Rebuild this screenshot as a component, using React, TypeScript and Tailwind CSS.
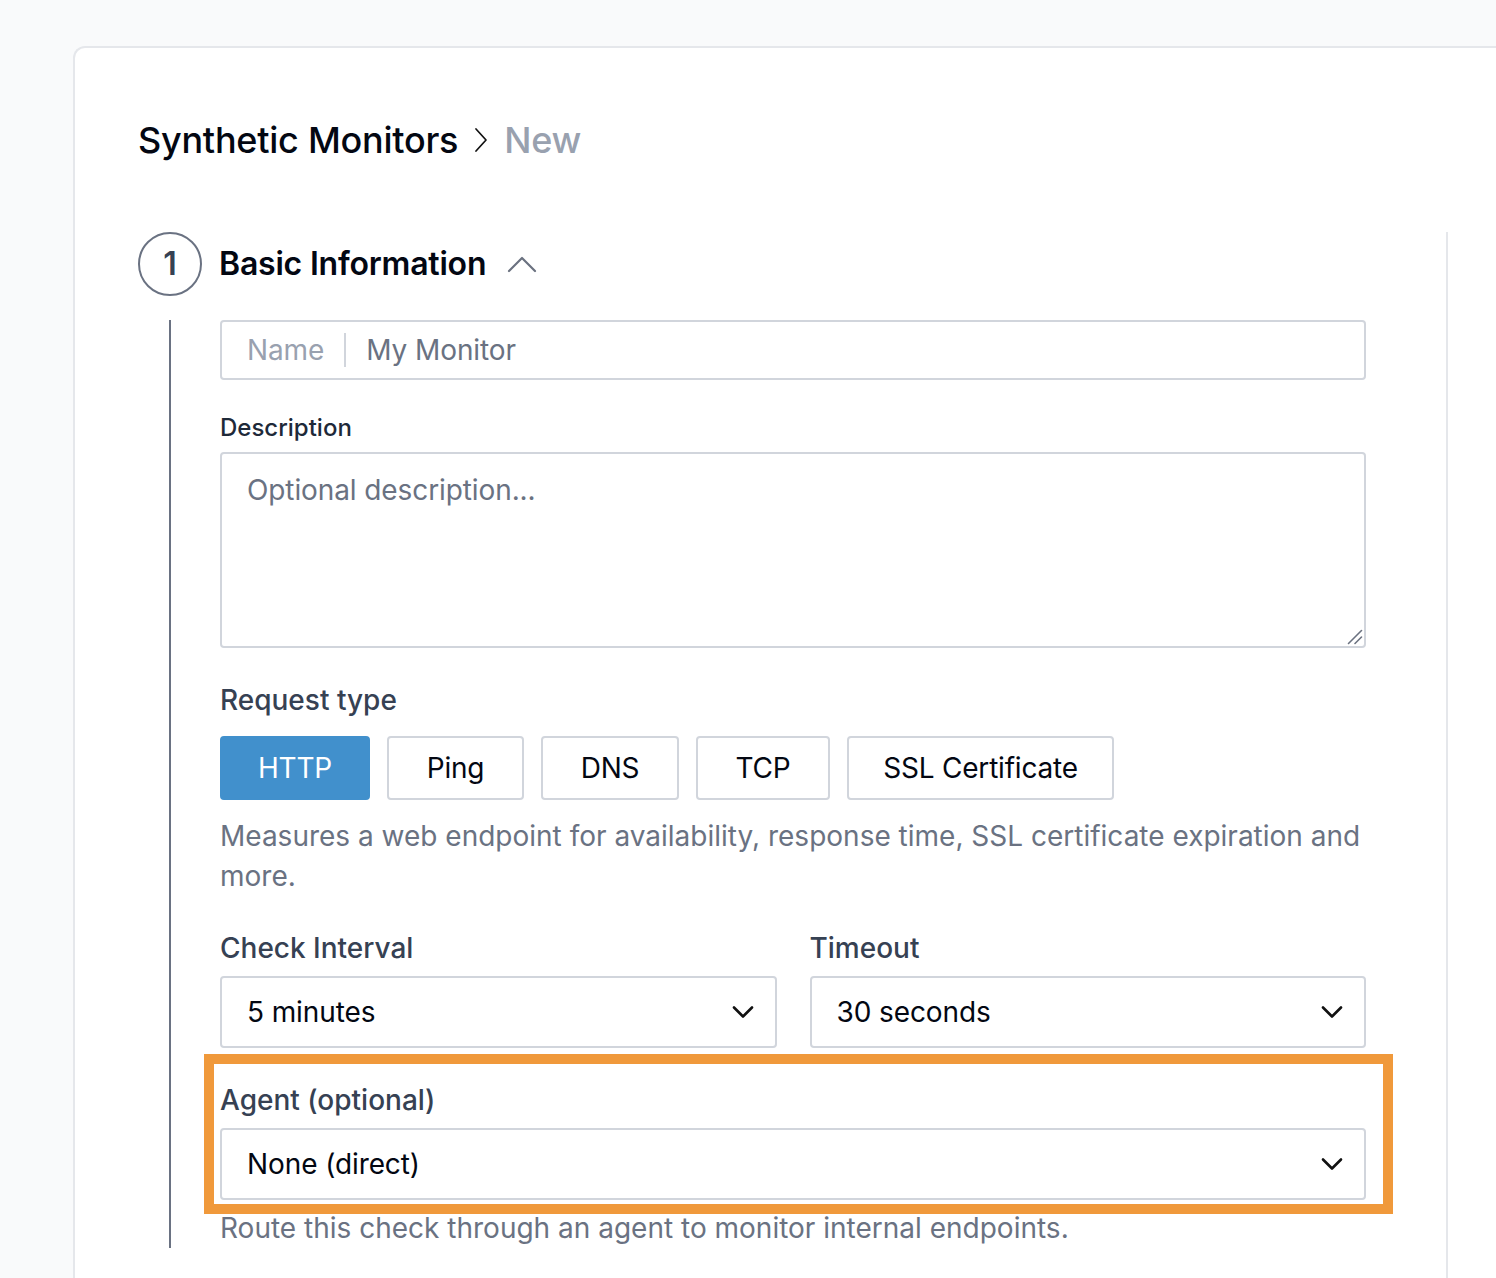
import React from "react";

const ChevronDown = () => (
  <svg width="22" height="14" viewBox="0 0 22 14" fill="none" className="shrink-0">
    <path d="M2 2.5 L11 11.5 L20 2.5" stroke="#111111" strokeWidth="2.6" strokeLinecap="round" strokeLinejoin="round" />
  </svg>
);

const SelectBox = ({ value }: { value: string }) => (
  <div className="flex h-[72px] items-center justify-between rounded-[4px] border-2 border-gray-300 bg-white pl-[25px] pr-[21px]">
    <span className="text-[28px] leading-[40px] tracking-[-0.1px] text-gray-950">{value}</span>
    <ChevronDown />
  </div>
);

const types = [
  { label: "HTTP", w: "w-[150px]", active: true },
  { label: "Ping", w: "w-[137px]", active: false },
  { label: "DNS", w: "w-[138px]", active: false },
  { label: "TCP", w: "w-[134px]", active: false },
  { label: "SSL Certificate", w: "w-[267px]", active: false },
];

export default function App() {
  return (
    <div
      className="h-[1278px] overflow-hidden bg-gray-50 pl-[73px] pt-[46px]"
      style={{ fontFamily: "Inter, 'Noto Sans', sans-serif" }}
    >
      <div className="mr-[-40px] min-h-[1300px] rounded-tl-[12px] border-l-2 border-t-2 border-gray-200 bg-white pl-[63px] pt-[72px]">
        {/* Breadcrumb */}
        <div className="flex h-[40px] items-center text-[36px] font-medium leading-[40px] tracking-[-0.25px]">
          <span className="text-gray-950">Synthetic Monitors</span>
          <svg width="14" height="28" viewBox="0 0 14 28" fill="none" className="ml-[16px] mr-[16px]">
            <path d="M2 3 L12 14 L2 25" stroke="#111111" strokeWidth="1.7" strokeLinecap="round" strokeLinejoin="round" />
          </svg>
          <span className="text-gray-400">New</span>
        </div>

        <div className="mt-[72px] flex">
          <div className="w-[1308px] shrink-0 pr-[80px]">
            {/* Step header */}
            <div className="flex items-center gap-[17px]">
              <div className="flex h-16 w-16 items-center justify-center rounded-full border-2 border-gray-500 text-[32px] font-semibold text-gray-700">
                1
              </div>
              <span className="text-[32px] font-semibold leading-[40px] tracking-[-0.2px] text-gray-950">Basic Information</span>
              <svg width="30" height="18" viewBox="0 0 30 18" fill="none" className="ml-[4px]">
                <path d="M2 16 L15 3 L28 16" stroke="#6b7280" strokeWidth="2.2" strokeLinecap="round" strokeLinejoin="round" />
              </svg>
            </div>

            {/* Step body */}
            <div className="ml-[31px] mt-6 flex flex-col gap-8 border-l-2 border-gray-500 pl-[49px]">
              {/* Name */}
              <div className="flex h-[60px] items-center rounded-[4px] border-2 border-gray-300 bg-white px-[25px]">
                <span className="text-[28px] leading-[40px] tracking-[-0.1px] text-gray-400">Name</span>
                <div className="mx-[20px] h-[34px] w-[2px] bg-gray-300" />
                <input
                  className="flex-1 bg-transparent text-[28px] leading-[40px] tracking-[-0.1px] text-gray-900 outline-none placeholder:text-gray-500"
                  placeholder="My Monitor"
                />
              </div>

              {/* Description */}
              <div>
                <div className="text-[24px] font-medium leading-[32px] text-gray-800">Description</div>
                <div className="relative mt-2">
                  <textarea
                    className="block h-[196px] w-full resize-none rounded-[4px] border-2 border-gray-300 bg-white px-[25px] pt-[16px] text-[28px] leading-[40px] tracking-[-0.1px] text-gray-900 outline-none placeholder:text-gray-500"
                    placeholder="Optional description..."
                  />
                  <svg width="16" height="16" viewBox="0 0 16 16" fill="none" className="pointer-events-none absolute bottom-[3px] right-[3px]">
                    <path d="M1.5 14.5 L14.5 1.5" stroke="#6b7280" strokeWidth="1.6" strokeLinecap="round" />
                    <path d="M8 14.5 L14.5 8" stroke="#6b7280" strokeWidth="1.6" strokeLinecap="round" />
                  </svg>
                </div>
              </div>

              {/* Request type */}
              <div>
                <div className="text-[28px] font-medium leading-[40px] text-gray-700">Request type</div>
                <div className="mt-4 flex gap-[17px]">
                  {types.map((t) => (
                    <div
                      key={t.label}
                      className={
                        t.active
                          ? `${t.w} flex h-[64px] items-center justify-center rounded-[4px] border-2 border-[#4190cc] bg-[#4190cc] text-[28px] tracking-[-0.2px] text-white`
                          : `${t.w} flex h-[64px] items-center justify-center rounded-[4px] border-2 border-gray-300 bg-white text-[28px] tracking-[-0.2px] text-gray-950`
                      }
                    >
                      {t.label}
                    </div>
                  ))}
                </div>
                <p className="mt-4 text-[28px] leading-[40px] text-gray-500">
                  Measures a web endpoint for availability, response time, SSL certificate expiration and more.
                </p>
              </div>

              {/* Interval / Timeout */}
              <div className="grid grid-cols-2 gap-[33px]">
                <div>
                  <div className="text-[28px] font-medium leading-[40px] text-gray-700">Check Interval</div>
                  <div className="mt-2">
                    <SelectBox value="5 minutes" />
                  </div>
                </div>
                <div>
                  <div className="text-[28px] font-medium leading-[40px] text-gray-700">Timeout</div>
                  <div className="mt-2">
                    <SelectBox value="30 seconds" />
                  </div>
                </div>
              </div>

              {/* Agent */}
              <div>
                <div className="relative">
                  <div className="text-[28px] font-medium leading-[40px] text-gray-700">Agent (optional)</div>
                  <div className="mt-2">
                    <SelectBox value="None (direct)" />
                  </div>
                  <div className="pointer-events-none absolute -bottom-[14px] -left-[16px] -right-[27px] -top-[26px] border-[10px] border-[#f0993b]" />
                </div>
                <p className="mt-2 text-[28px] leading-[40px] text-gray-500">
                  Route this check through an agent to monitor internal endpoints.
                </p>
              </div>
            </div>
          </div>
          <div className="min-h-[1100px] flex-1 border-l-2 border-gray-200" />
        </div>
      </div>
    </div>
  );
}
